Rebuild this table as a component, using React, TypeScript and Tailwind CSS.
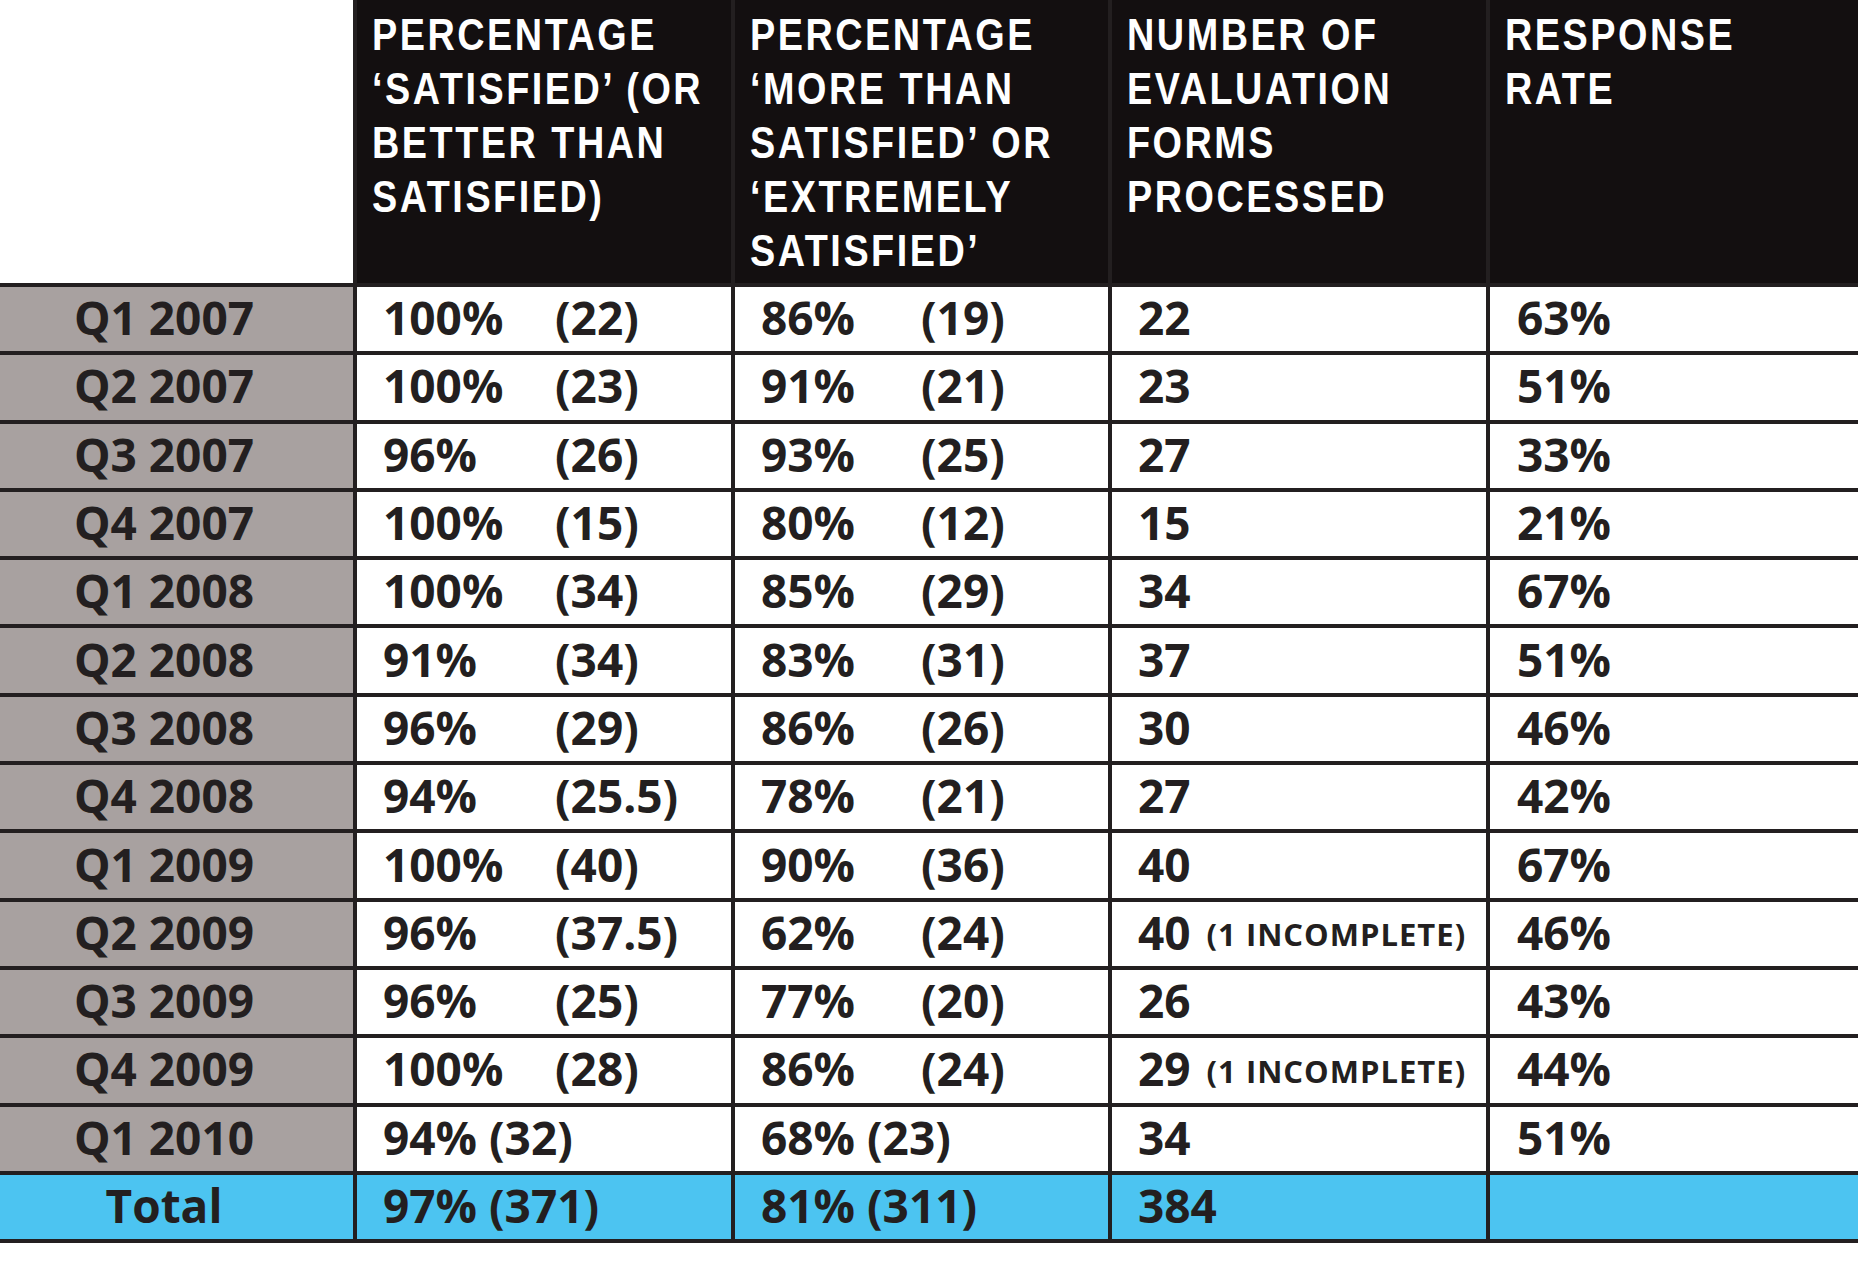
import React from 'react';

interface Row {
  q: string;
  a: [string, string];
  b: [string, string];
  n: string;
  note?: string;
  r: string;
  tight?: boolean;
}

const ROWS: Row[] = [
  { q: 'Q1 2007', a: ['100%', '(22)'], b: ['86%', '(19)'], n: '22', r: '63%' },
  { q: 'Q2 2007', a: ['100%', '(23)'], b: ['91%', '(21)'], n: '23', r: '51%' },
  { q: 'Q3 2007', a: ['96%', '(26)'], b: ['93%', '(25)'], n: '27', r: '33%' },
  { q: 'Q4 2007', a: ['100%', '(15)'], b: ['80%', '(12)'], n: '15', r: '21%' },
  { q: 'Q1 2008', a: ['100%', '(34)'], b: ['85%', '(29)'], n: '34', r: '67%' },
  { q: 'Q2 2008', a: ['91%', '(34)'], b: ['83%', '(31)'], n: '37', r: '51%' },
  { q: 'Q3 2008', a: ['96%', '(29)'], b: ['86%', '(26)'], n: '30', r: '46%' },
  { q: 'Q4 2008', a: ['94%', '(25.5)'], b: ['78%', '(21)'], n: '27', r: '42%' },
  { q: 'Q1 2009', a: ['100%', '(40)'], b: ['90%', '(36)'], n: '40', r: '67%' },
  { q: 'Q2 2009', a: ['96%', '(37.5)'], b: ['62%', '(24)'], n: '40', note: '(1 INCOMPLETE)', r: '46%' },
  { q: 'Q3 2009', a: ['96%', '(25)'], b: ['77%', '(20)'], n: '26', r: '43%' },
  { q: 'Q4 2009', a: ['100%', '(28)'], b: ['86%', '(24)'], n: '29', note: '(1 INCOMPLETE)', r: '44%' },
  { q: 'Q1 2010', a: ['94%', '(32)'], b: ['68%', '(23)'], n: '34', r: '51%', tight: true },
];

const HEADERS: string[][] = [
  ['PERCENTAGE', '‘SATISFIED’ (OR', 'BETTER THAN', 'SATISFIED)'],
  ['PERCENTAGE', '‘MORE THAN', 'SATISFIED’ OR', '‘EXTREMELY', 'SATISFIED’'],
  ['NUMBER OF', 'EVALUATION', 'FORMS', 'PROCESSED'],
  ['RESPONSE', 'RATE'],
];

function PctCell({ pair, box, tight }: { pair: [string, string]; box: string; tight?: boolean }) {
  return (
    <div className="bg-white h-[64.3px] flex items-center pl-[26px] pb-[4px]">
      {tight ? (
        <span>{pair[0]} {pair[1]}</span>
      ) : (
        <>
          <span className={box}>{pair[0]}</span>
          <span>{pair[1]}</span>
        </>
      )}
    </div>
  );
}

export default function App() {
  return (
    <div className="w-[1858px] bg-white">
      <div className="grid grid-cols-[353px_374px_373px_374px_1fr] gap-[4px] bg-[#231f20] pb-[4px] font-['Open_Sans',sans-serif] font-bold text-[46px] text-[#231f20] leading-none">
        {/* Header */}
        <div className="bg-white h-[283px]" />
        {HEADERS.map((lines, i) => (
          <div key={i} className="bg-[#130f10] h-[283px] pl-[15px] pt-[8px] overflow-hidden">
            <div className="origin-left scale-x-[0.84] text-white font-['Liberation_Sans',Arial,sans-serif] font-bold text-[45px] leading-[54px] tracking-[3px]">
              {lines.map((l, j) => (
                <div key={j} className="whitespace-nowrap">{l}</div>
              ))}
            </div>
          </div>
        ))}

        {/* Rows */}
        {ROWS.map((row) => (
          <React.Fragment key={row.q}>
            <div className="bg-[#a8a1a0] h-[64.3px] flex items-center justify-center pr-[25px] pb-[4px]">
              {row.q}
            </div>
            <PctCell pair={row.a} box="inline-block w-[172px]" tight={row.tight} />
            <PctCell pair={row.b} box="inline-block w-[160px]" tight={row.tight} />
            <div className="bg-white h-[64.3px] flex items-center pl-[26px] pb-[4px]">
              <span>{row.n}</span>
              {row.note && (
                <span className="ml-[16px] text-[31px] tracking-[1px] translate-y-[3px]">{row.note}</span>
              )}
            </div>
            <div className="bg-white h-[64.3px] flex items-center pl-[27px] pb-[4px]">{row.r}</div>
          </React.Fragment>
        ))}

        {/* Total */}
        <div className="bg-[#4cc4f1] h-[64.3px] flex items-center justify-center pr-[25px] pb-[4px]">Total</div>
        <div className="bg-[#4cc4f1] h-[64.3px] flex items-center pl-[26px] pb-[4px]">97% (371)</div>
        <div className="bg-[#4cc4f1] h-[64.3px] flex items-center pl-[26px] pb-[4px]">81% (311)</div>
        <div className="bg-[#4cc4f1] h-[64.3px] flex items-center pl-[26px] pb-[4px]">384</div>
        <div className="bg-[#4cc4f1] h-[64.3px]" />
      </div>
    </div>
  );
}
